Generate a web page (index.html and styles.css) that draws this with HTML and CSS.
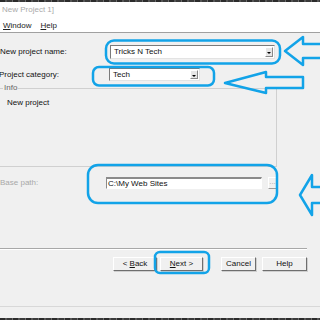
FILE: index.html
```html
<!DOCTYPE html>
<html lang="en">
<head>
    <meta charset="UTF-8">
    <meta name="viewport" content="width=device-width, initial-scale=1.0">
    <title>New Project</title>
    <link rel="stylesheet" href="styles.css">
</head>
<body>
    <div class="band band-top"></div>
    <div class="titlebar">
        <div class="title">New Project 1]</div>
        <div class="menu">
            <span><u>W</u>indow</span>
            <span><u>H</u>elp</span>
        </div>
    </div>

    <div class="dialog">
        <div class="row row-name">
            <label class="lbl lbl-name">New project name:</label>
            <div class="combo combo-wide">
                <span class="combo-text">Tricks N Tech</span>
                <span class="drop"></span>
            </div>
        </div>
        <div class="row row-cat">
            <label class="lbl lbl-cat">Project category:</label>
            <div class="combo combo-narrow">
                <span class="combo-text">Tech</span>
                <span class="drop"></span>
            </div>
        </div>

        <div class="info">
            <div class="info-legend">Info</div>
            <p class="info-text">New project</p>
        </div>

        <div class="row row-path">
            <label class="lbl lbl-path">Base path:</label>
            <div class="pathbox">C:\My Web Sites</div>
            <div class="browse">...</div>
        </div>

        <div class="sep"></div>

        <div class="buttons">
            <div class="btn btn-back">&lt; <u>B</u>ack</div>
            <div class="btn btn-next"><u>N</u>ext &gt;</div>
            <div class="btn btn-cancel">Cancel</div>
            <div class="btn btn-help">Help</div>
        </div>

        <div class="foot-line"></div>
    </div>
    <div class="band band-bottom"></div>

    <!-- annotation marks drawn over the dialog -->
    <svg class="marks" width="320" height="320" viewBox="0 0 320 320">
        <rect x="106" y="40.5" width="174" height="23" rx="8"/>
        <rect x="93" y="67" width="121" height="18.5" rx="6"/>
        <rect x="88" y="165" width="189" height="38" rx="10"/>
        <rect x="155" y="252" width="54" height="21" rx="5"/>
        <polygon points="285,51 303,37 303,44 323,44 323,58 303,58 303,65"/>
        <polygon points="225,83 266,72 266,77 303,77 303,88 266,88 266,93"/>
        <polygon points="300,195 312,175 312,187 323,187 323,203 312,203 312,215"/>
    </svg>
</body>
</html>
```

FILE: styles.css
```css
body {
    margin: 0;
    width: 320px;
    height: 320px;
    overflow: hidden;
    position: relative;
    background-color: #f0f0f0;
    font-family: "Liberation Sans Narrow", "Liberation Sans", Arial, sans-serif;
    font-size: 8px;
    color: #111;
}
.band {
    background: repeating-linear-gradient(90deg, #2b2b2b 0 5px, #555 5px 7px, #3a3a3a 7px 12px, #6a6a6a 12px 13px);
}
.band-top {
    height: 2px;
}
.band-bottom {
    height: 10px;
    margin-top: 11px;
}
.titlebar {
    height: 30px;
    background-color: #fff;
    border-bottom: 1px solid #a0a0a0;
}
.title {
    padding: 3px 0 0 2px;
    line-height: 10px;
    color: #aaa;
}
.menu {
    display: flex;
    gap: 9px;
    margin-top: 6px;
    padding-left: 3px;
    line-height: 10px;
    color: #222;
}
.dialog {
    display: flex;
    flex-direction: column;
}
.row {
    display: flex;
    align-items: center;
}
.row-name {
    margin-top: 12px;
    height: 14px;
}
.row-cat {
    margin-top: 9px;
    height: 13px;
}
.lbl {
    flex: none;
    line-height: 12px;
}
.lbl-name {
    width: 110px;
}
.lbl-cat {
    width: 110px;
    margin-left: -1px;
}
.lbl-path {
    width: 106px;
    color: #a8a8a8;
}
.combo {
    display: flex;
    align-items: center;
    height: 100%;
    box-sizing: border-box;
    background-color: #fff;
    border: 1px solid;
    border-color: #7a7a7a #e3e3e3 #e3e3e3 #7a7a7a;
    padding: 1px;
}
.combo-wide {
    width: 165px;
}
.combo-narrow {
    width: 91px;
}
.combo-text {
    flex: 1;
    padding-left: 2px;
    line-height: 10px;
}
.drop {
    position: relative;
    width: 8px;
    height: 100%;
    box-sizing: border-box;
    background-color: #e6e6e6;
    border: 1px solid;
    border-color: #fff #8a8a8a #8a8a8a #fff;
}
.drop::after {
    content: "";
    position: absolute;
    left: 1px;
    top: 4px;
    border-left: 2px solid transparent;
    border-right: 2px solid transparent;
    border-top: 2px solid #000;
}
.info {
    margin-top: 7px;
    width: 277px;
    height: 79px;
    box-sizing: border-box;
    border: 1px solid #d0d0d0;
    border-left: none;
}
.info-legend {
    width: fit-content;
    margin: -6px 0 0 3px;
    padding: 0 1px;
    line-height: 10px;
    background-color: #f0f0f0;
    color: #666;
}
.info-text {
    margin: 5px 0 0 7px;
    line-height: 10px;
}
.row-path {
    margin-top: 10px;
    height: 12px;
}
.pathbox {
    width: 156px;
    height: 100%;
    box-sizing: border-box;
    background-color: #fff;
    border: 1px solid;
    border-color: #8a8a8a #fff #fff #8a8a8a;
    border-top-width: 2px;
    padding-left: 1px;
    line-height: 9px;
}
.browse {
    width: 9px;
    height: 100%;
    margin-left: 6px;
    box-sizing: border-box;
    border: 1px solid;
    border-color: #fff #999 #999 #fff;
    color: #aaa;
    text-align: center;
    line-height: 8px;
}
.sep {
    margin-top: 59px;
    width: 307px;
    height: 1px;
    background-color: #a8a8a8;
    border-bottom: 1px solid #fff;
}
.buttons {
    display: flex;
    margin-top: 7px;
    height: 14px;
}
.btn {
    box-sizing: border-box;
    height: 100%;
    border: 1px solid;
    border-color: #fff #6e6e6e #6e6e6e #fff;
    box-shadow: 1px 1px 0 #cfcfcf;
    text-align: center;
    line-height: 12px;
}
.btn-back {
    width: 44px;
    margin-left: 113px;
}
.btn-next {
    width: 43px;
    margin-left: 3px;
}
.btn-cancel {
    width: 35px;
    margin-left: 18px;
}
.btn-help {
    width: 45px;
    margin-left: 6px;
}
.foot-line {
    margin-top: 35px;
    height: 1px;
    background-color: #d8d8d8;
}
.marks {
    position: absolute;
    left: 0;
    top: 0;
    pointer-events: none;
    fill: none;
    stroke: #12a3e8;
    stroke-width: 2.5;
    stroke-linejoin: round;
}
```
